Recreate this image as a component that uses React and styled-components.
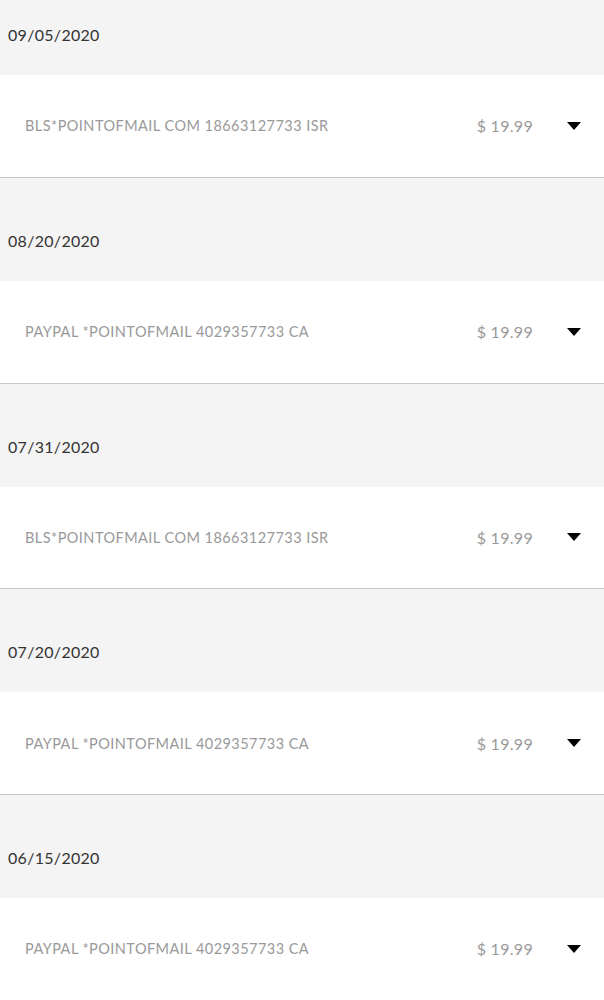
import styled, { createGlobalStyle } from "styled-components";

const GlobalStyle = createGlobalStyle`
  html, body {
    margin: 0;
    padding: 0;
    background: #ffffff;
    font-family: Lato, "Open Sans", sans-serif;
    overflow: hidden;
  }
`;

const List = styled.div`
  width: 604px;
  margin-top: -28px;
`;

const Group = styled.section`
  border-bottom: 1px solid #c8c8c8;
`;

const DateHeader = styled.div`
  height: 103px;
  box-sizing: border-box;
  background: #f4f4f4;
  display: flex;
  align-items: flex-end;
  padding: 0 0 31px 8px;
  font-size: 16px;
  color: #333333;
  letter-spacing: 0.3px;
`;

const Row = styled.div`
  height: 101.75px;
  display: flex;
  align-items: center;
  padding: 0 23px 0 25px;
  background: #ffffff;
`;

const Merchant = styled.div`
  flex: 1;
  font-size: 14.5px;
  letter-spacing: 0.45px;
  color: #999999;
  white-space: nowrap;
`;

const Amount = styled.div`
  font-size: 16px;
  letter-spacing: 0.3px;
  color: #999999;
  margin-right: 34px;
`;

const Caret = styled.svg`
  width: 14px;
  height: 8px;
  display: block;
`;

const transactions = [
  { date: "09/05/2020", merchant: "BLS*POINTOFMAIL COM 18663127733 ISR", amount: "$ 19.99" },
  { date: "08/20/2020", merchant: "PAYPAL *POINTOFMAIL 4029357733 CA", amount: "$ 19.99" },
  { date: "07/31/2020", merchant: "BLS*POINTOFMAIL COM 18663127733 ISR", amount: "$ 19.99" },
  { date: "07/20/2020", merchant: "PAYPAL *POINTOFMAIL 4029357733 CA", amount: "$ 19.99" },
  { date: "06/15/2020", merchant: "PAYPAL *POINTOFMAIL 4029357733 CA", amount: "$ 19.99" },
];

const App = () => {
  return (
    <>
      <GlobalStyle />
      <List>
        {transactions.map((t) => (
          <Group key={t.date}>
            <DateHeader>{t.date}</DateHeader>
            <Row>
              <Merchant>{t.merchant}</Merchant>
              <Amount>{t.amount}</Amount>
              <Caret viewBox="0 0 14 8">
                <path d="M0 0 L14 0 L7 8 Z" fill="#000" />
              </Caret>
            </Row>
          </Group>
        ))}
      </List>
    </>
  );
};

export default App;
